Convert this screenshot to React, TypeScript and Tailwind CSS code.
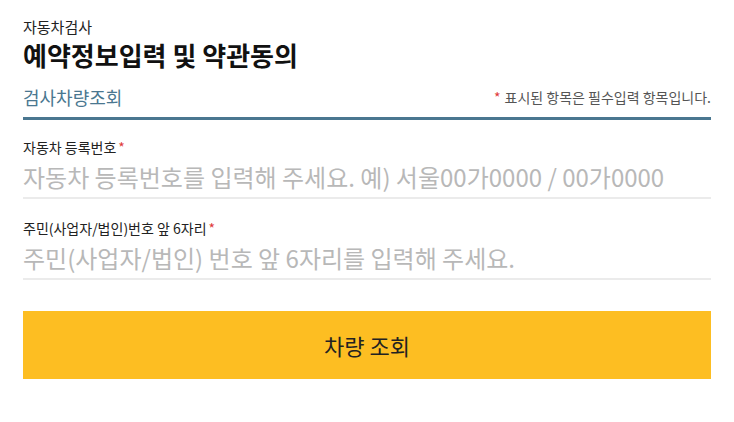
const font = { fontFamily: '"Noto Sans CJK KR", "Noto Sans", sans-serif' };

function Field({ label, placeholder, top }: { label: string; placeholder: string; top: string }) {
  return (
    <div className={top}>
      <label className="block text-[14px] leading-[20px] text-[#222]">
        {label}
        <span className="ml-[2px] text-[#e03a3a]">*</span>
      </label>
      <input
        className="mt-[3px] block w-full border-b-2 border-[#ebebeb] pb-[3px] text-[24px] leading-[34px] text-[#333] outline-none placeholder:text-[#b8b8b8]"
        placeholder={placeholder}
      />
    </div>
  );
}

export default function App() {
  return (
    <div className="min-h-[422px] bg-white px-[23px] pt-[17px]" style={font}>
      <div className="text-[15px] leading-[20px] text-[#222]">자동차검사</div>
      <h1 className="mt-[2px] text-[26px] font-bold leading-[32px] text-[#111]">
        예약정보입력 및 약관동의
      </h1>
      <div className="mt-[13px] flex items-center justify-between border-b-[3px] border-[#4a7790] pb-[7px]">
        <span className="text-[18px] leading-[26px] text-[#4a7790]">검사차량조회</span>
        <span className="text-[14px] leading-[20px] text-[#555]">
          <span className="mr-[4px] text-[#e03a3a]">*</span>표시된 항목은 필수입력 항목입니다.
        </span>
      </div>
      <Field
        top="pt-[17px]"
        label="자동차 등록번호"
        placeholder="자동차 등록번호를 입력해 주세요. 예) 서울00가0000 / 00가0000"
      />
      <Field
        top="pt-[19px]"
        label="주민(사업자/법인)번호 앞 6자리"
        placeholder="주민(사업자/법인) 번호 앞 6자리를 입력해 주세요."
      />
      <button className="mt-[31px] flex h-[68px] w-full items-center justify-center bg-[#fdbe22] text-[22px] text-[#222]">
        차량 조회
      </button>
    </div>
  );
}
